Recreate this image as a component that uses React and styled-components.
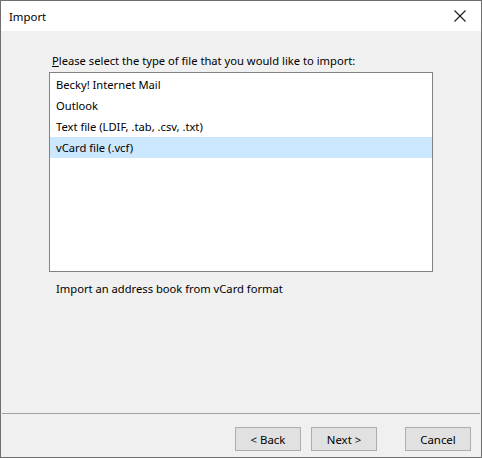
import styled, { createGlobalStyle } from 'styled-components'

const GlobalStyle = createGlobalStyle`
html, body {
    margin: 0;
    padding: 0;
    background: #f0f0f0;
}
* {
    box-sizing: border-box;
}
`

const items = [
    'Becky! Internet Mail',
    'Outlook',
    'Text file (LDIF, .tab, .csv, .txt)',
    'vCard file (.vcf)',
]

const App = () => {
    return (
        <Window>
            <GlobalStyle />
            <TitleBar>
                <Title>Import</Title>
                <CloseButton aria-label="Close">
                    <svg width="12" height="12" viewBox="0 0 12 12">
                        <path d="M0.5 0.5 L11.5 11.5 M11.5 0.5 L0.5 11.5" stroke="#1a1a1a" strokeWidth="1.1" fill="none" />
                    </svg>
                </CloseButton>
            </TitleBar>
            <Body>
                <Content>
                    <Label><u>P</u>lease select the type of file that you would like to import:</Label>
                    <ListBox>
                        {items.map((item, i) => (
                            <ListItem key={item} selected={i === 3}>{item}</ListItem>
                        ))}
                    </ListBox>
                    <Description>Import an address book from vCard format</Description>
                </Content>
                <Footer>
                    <Button>&lt; Back</Button>
                    <Button>Next &gt;</Button>
                    <Button gapLeft>Cancel</Button>
                </Footer>
            </Body>
        </Window>
    )
}

export default App;

const Window = styled.div`
width: 482px;
height: 458px;
display: flex;
flex-direction: column;
border: 1px solid #6f6f6f;
font-family: "Noto Sans", "Open Sans", sans-serif;
font-size: 11.2px;
color: #000;
`
const TitleBar = styled.div`
height: 30px;
background: #fff;
display: flex;
align-items: center;
justify-content: space-between;
padding-left: 8px;
`
const Title = styled.span`
font-size: 11.4px;
`
const CloseButton = styled.div`
width: 46px;
height: 30px;
display: flex;
align-items: center;
justify-content: center;
padding-left: 4px;
`
const Body = styled.div`
flex: 1;
background: #f0f0f0;
display: flex;
flex-direction: column;
`
const Content = styled.div`
padding: 22px 48px 0 48px;
display: flex;
flex-direction: column;
`
const Label = styled.div`
line-height: 16px;
margin-left: 3px;
margin-bottom: 3px;
`
const ListBox = styled.div`
height: 200px;
background: #fff;
border: 1px solid #828282;
padding-top: 1px;
display: flex;
flex-direction: column;
`
const ListItem = styled.div`
height: 21px;
line-height: 21px;
padding-left: 6px;
background: ${props => props.selected ? '#cce8ff' : 'transparent'};
`
const Description = styled.div`
line-height: 16px;
margin-top: 9px;
padding-left: 7px;
`
const Footer = styled.div`
margin-top: auto;
margin-left: 1px;
margin-right: 1px;
border-top: 1px solid #a0a0a0;
height: 44px;
display: flex;
justify-content: flex-end;
align-items: flex-start;
padding: 13px 9px 0 0;
gap: 10px;
`
const Button = styled.button`
width: 66px;
height: 24px;
border: 1px solid #adadad;
background: #e1e1e1;
font-family: inherit;
font-size: 11.4px;
color: #000;
padding: 0;
margin-left: ${props => props.gapLeft ? '18px' : '0'};
`
